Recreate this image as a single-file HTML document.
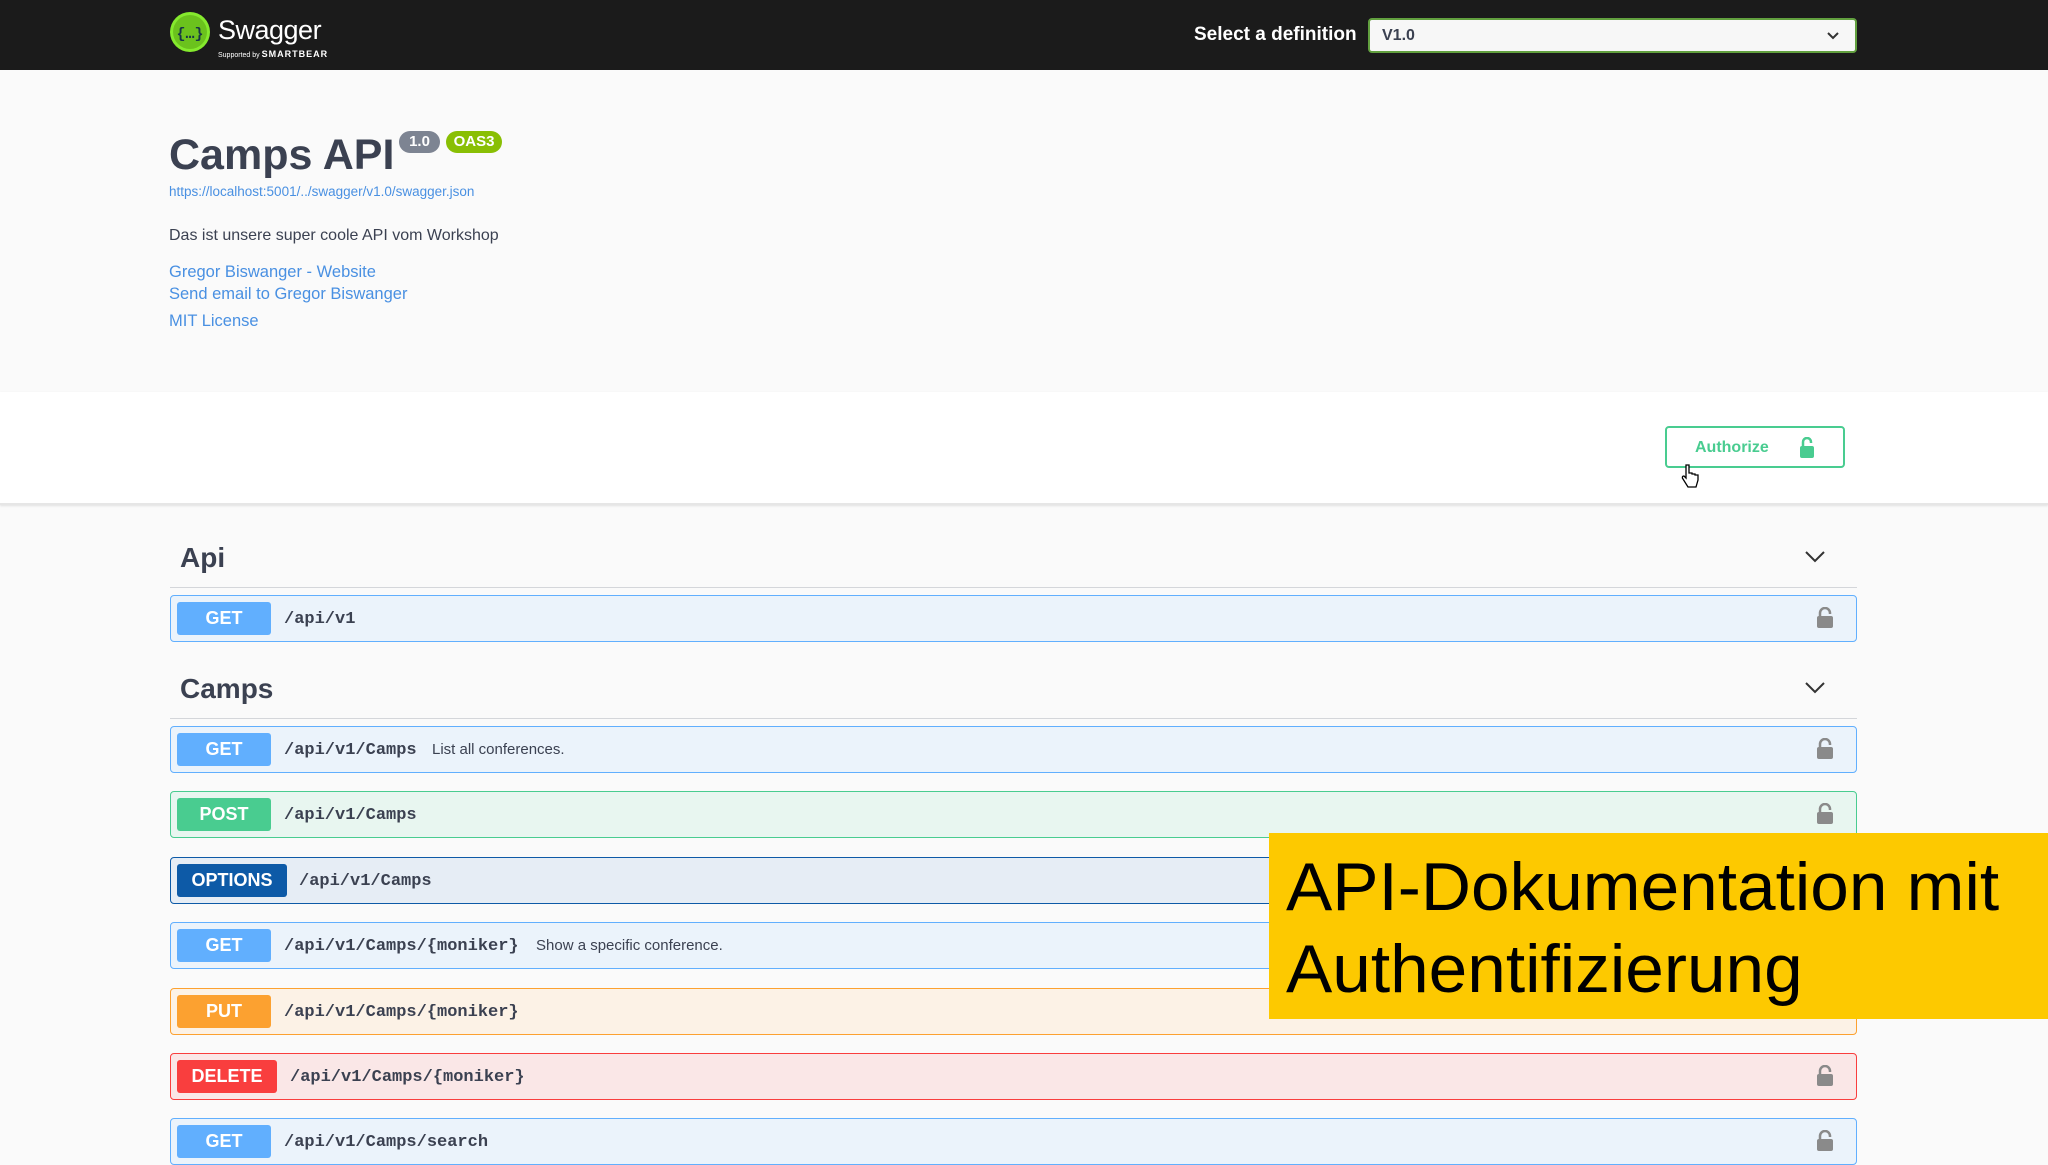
<!DOCTYPE html>
<html><head><meta charset="utf-8"><style>
*{margin:0;padding:0;box-sizing:border-box}
body{width:2048px;height:1152px;overflow:hidden;background:#fafafa;font-family:"Liberation Sans",sans-serif;position:relative;color:#3b4151}
.abs{position:absolute}
.hdr{left:0;top:0;width:2048px;height:70px;background:#1b1b1b}
.row{position:absolute;left:170px;width:1687px;height:47px;border:1.5px solid;border-radius:4px}
.badge{position:absolute;left:6px;top:6px;height:33px;border-radius:3px;color:#fff;font-weight:bold;font-size:18px;line-height:33px;text-align:center;width:94px}
.path{position:absolute;top:1px;line-height:45px;font-family:"Liberation Mono",monospace;font-weight:bold;font-size:17px;color:#3b4151}
.desc{position:absolute;top:1px;line-height:44px;font-size:15px;color:#3b4151}
.lock{position:absolute;right:22px;top:11px}
.get{background:#ebf3fb;border-color:#61affe}.get .badge{background:#61affe}
.post{background:#e8f6f0;border-color:#49cc90}.post .badge{background:#49cc90}
.opt{background:#e6edf5;border-color:#0d5aa7}.opt .badge{background:#0d5aa7;width:110px}
.put{background:#fcf2e6;border-color:#fca130}.put .badge{background:#fca130}
.del{background:#fae7e7;border-color:#f93e3e}.del .badge{background:#f93e3e;width:100px}
.sec{position:absolute;left:180px;font-size:28px;font-weight:bold;color:#3b4151}
.line{position:absolute;left:170px;width:1687px;height:1px;background:#d4d6da}
a{color:#4990e2;text-decoration:none}
</style></head><body>
<div class="abs hdr"></div>
<svg class="abs" style="left:169px;top:11px" width="42" height="42" viewBox="0 0 42 42"><circle cx="21" cy="21" r="20" fill="#85ea2d"/><circle cx="21" cy="21" r="17" fill="#6bc21d"/><text x="21" y="27" text-anchor="middle" font-family="Liberation Mono" font-weight="bold" font-size="15" fill="#173647">{…}</text></svg>
<div class="abs" style="left:218px;top:15px;font-size:27px;color:#fff;letter-spacing:-0.5px">Swagger</div>
<div class="abs" style="left:218px;top:49px;font-size:7px;color:#fff">Supported by <b style="font-size:9px;letter-spacing:1px">SMARTBEAR</b></div>
<div class="abs" style="left:1194px;top:24px;font-size:19px;font-weight:bold;color:#fff">Select a definition</div>
<div class="abs" style="left:1368px;top:18px;width:489px;height:35px;border:2px solid #62a03f;border-radius:4px;background:#f7f7f7;font-size:16px;font-weight:bold;color:#3b4151;padding:7px 12px">V1.0
<svg class="abs" style="right:16px;top:12px" width="12" height="8" viewBox="0 0 12 8"><path d="M1 1l5 5 5-5" stroke="#333" stroke-width="2" fill="none"/></svg></div>

<div class="abs" style="left:169px;top:131px;font-size:43px;font-weight:bold;color:#3b4151">Camps API</div>
<div class="abs" style="left:399px;top:131px;width:41px;height:22px;border-radius:11px;background:#7d8492;color:#fff;font-size:15px;font-weight:bold;text-align:center;line-height:22px">1.0</div>
<div class="abs" style="left:446px;top:131px;width:56px;height:22px;border-radius:11px;background:#89bf04;color:#fff;font-size:15px;font-weight:bold;text-align:center;line-height:22px">OAS3</div>
<div class="abs" style="left:169px;top:184px;font-size:13.5px"><a>https://localhost:5001/../swagger/v1.0/swagger.json</a></div>
<div class="abs" style="left:169px;top:227px;font-size:16px;color:#3b4151">Das ist unsere super coole API vom Workshop</div>
<div class="abs" style="left:169px;top:263px;font-size:16.5px"><a>Gregor Biswanger - Website</a></div>
<div class="abs" style="left:169px;top:285px;font-size:16.5px"><a>Send email to Gregor Biswanger</a></div>
<div class="abs" style="left:169px;top:312px;font-size:16.5px"><a>MIT License</a></div>

<div class="abs" style="left:0;top:392px;width:2048px;height:113px;background:#fff;border-bottom:2px solid #e6e6e6;box-shadow:0 1px 2px rgba(0,0,0,.1)"></div>
<div class="abs" style="left:1665px;top:426px;width:180px;height:42px;border:2px solid #49cc90;border-radius:4px;background:#fff;color:#49cc90;font-weight:bold;font-size:16px;line-height:40px;padding-left:28px">Authorize
<svg class="abs" style="left:132px;top:9px" width="16" height="22" viewBox="0 0 16 22"><path d="M4 9V5a4 4 0 0 1 8 0v1" stroke="#49cc90" stroke-width="2.5" fill="none"/><rect x="1" y="9" width="14" height="12" rx="2" fill="#49cc90"/></svg></div>
<svg class="abs" style="left:1681px;top:463px" width="18" height="28" viewBox="0 0 18 28"><path d="M5 2v13l-2-2c-2 0-2 2-1 3l5 8h8l2-7v-5h-3v-1h-3v-1h-3V2z" fill="#fff" stroke="#000" stroke-width="1.3"/></svg>

<div class="sec" style="top:542px">Api</div>
<svg class="abs" style="left:1805px;top:551px" width="20" height="12" viewBox="0 0 20 12"><path d="M1 1l9 9 9-9" stroke="#333" stroke-width="2" fill="none"/></svg>
<div class="line" style="top:587px"></div>
<div class="row get" style="top:595px"><div class="badge">GET</div><div class="path" style="left:113px">/api/v1</div><svg class="lock" width="18" height="22" viewBox="0 0 18 22"><path d="M4 9V6a5 5 0 0 1 10 0v1" stroke="#8a8a8a" stroke-width="2.5" fill="none"/><rect x="1" y="9" width="16" height="12" rx="2" fill="#8a8a8a"/></svg></div>

<div class="sec" style="top:673px">Camps</div>
<svg class="abs" style="left:1805px;top:682px" width="20" height="12" viewBox="0 0 20 12"><path d="M1 1l9 9 9-9" stroke="#333" stroke-width="2" fill="none"/></svg>
<div class="line" style="top:718px"></div>

<div class="row get" style="top:726px"><div class="badge">GET</div><div class="path" style="left:113px">/api/v1/Camps</div><div class="desc" style="left:261px">List all conferences.</div><svg class="lock" width="18" height="22" viewBox="0 0 18 22"><path d="M4 9V6a5 5 0 0 1 10 0v1" stroke="#8a8a8a" stroke-width="2.5" fill="none"/><rect x="1" y="9" width="16" height="12" rx="2" fill="#8a8a8a"/></svg></div>
<div class="row post" style="top:791px"><div class="badge">POST</div><div class="path" style="left:113px">/api/v1/Camps</div><svg class="lock" width="18" height="22" viewBox="0 0 18 22"><path d="M4 9V6a5 5 0 0 1 10 0v1" stroke="#8a8a8a" stroke-width="2.5" fill="none"/><rect x="1" y="9" width="16" height="12" rx="2" fill="#8a8a8a"/></svg></div>
<div class="row opt" style="top:857px"><div class="badge">OPTIONS</div><div class="path" style="left:128px">/api/v1/Camps</div></div>
<div class="row get" style="top:922px"><div class="badge">GET</div><div class="path" style="left:113px">/api/v1/Camps/{moniker}</div><div class="desc" style="left:365px">Show a specific conference.</div></div>
<div class="row put" style="top:988px"><div class="badge">PUT</div><div class="path" style="left:113px">/api/v1/Camps/{moniker}</div></div>
<div class="row del" style="top:1053px"><div class="badge">DELETE</div><div class="path" style="left:119px">/api/v1/Camps/{moniker}</div><svg class="lock" width="18" height="22" viewBox="0 0 18 22"><path d="M4 9V6a5 5 0 0 1 10 0v1" stroke="#8a8a8a" stroke-width="2.5" fill="none"/><rect x="1" y="9" width="16" height="12" rx="2" fill="#8a8a8a"/></svg></div>
<div class="row get" style="top:1118px"><div class="badge">GET</div><div class="path" style="left:113px">/api/v1/Camps/search</div><svg class="lock" width="18" height="22" viewBox="0 0 18 22"><path d="M4 9V6a5 5 0 0 1 10 0v1" stroke="#8a8a8a" stroke-width="2.5" fill="none"/><rect x="1" y="9" width="16" height="12" rx="2" fill="#8a8a8a"/></svg></div>

<div class="abs" style="left:1269px;top:833px;width:779px;height:186px;background:#fdc900"></div>
<div class="abs" style="left:1286px;top:846px;font-size:68px;line-height:82px;color:#000;transform:scaleX(1.02);transform-origin:0 0;white-space:nowrap">API-Dokumentation mit<br>Authentifizierung</div>
</body></html>
